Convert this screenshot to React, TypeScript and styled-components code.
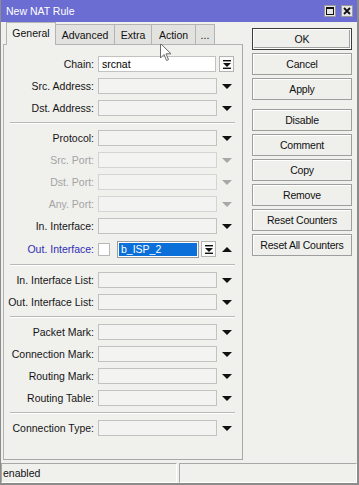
import React from 'react';
import styled, { createGlobalStyle, css } from 'styled-components';

const GlobalStyle = createGlobalStyle`
    body {
        margin: 0;
        font-family: "Liberation Sans", Arial, sans-serif;
        font-size: 10.5px;
        color: #111;
    }
`;

const StyledWindow = styled.div`
    width: 359px;
    height: 485px;
    box-sizing: border-box;
    display: flex;
    flex-direction: column;
    background: #f0f0ed;
    border-left: 1px solid #8c8c8c;
    border-right: 2px solid #8c8c8c;
    border-bottom: 2px solid #8c8c8c;
    position: relative;
    overflow: hidden;
`;

const StyledTitleBar = styled.div`
    height: 22px;
    flex: none;
    display: flex;
    align-items: center;
    justify-content: space-between;
    padding: 0 4px 0 5px;
    background: #6c6dd2;
    color: #fff;
    font-size: 10.5px;
`;

const StyledTitleButtons = styled.div`
    display: flex;
    gap: 5px;
`;

const StyledTitleButton = styled.div`
    width: 12px;
    height: 12px;
    box-sizing: border-box;
    background: #e6e6e6;
    border: 1px solid #9a9a9a;
    display: flex;
    align-items: center;
    justify-content: center;
`;

const StyledBody = styled.div`
    flex: 1;
    display: flex;
    padding-left: 2px;
`;

const StyledLeft = styled.div`
    width: 240px;
    display: flex;
    flex-direction: column;
`;

const StyledTabs = styled.div`
    height: 22px;
    display: flex;
    align-items: flex-end;
    padding-left: 3px;
    position: relative;
    z-index: 1;
`;

const StyledTab = styled.div<{ $active?: boolean; $width: number }>`
    width: ${({ $width }) => $width}px;
    box-sizing: border-box;
    display: flex;
    align-items: center;
    justify-content: center;
    border: 1px solid #b4b4b4;
    border-bottom: none;
    ${({ $active }) => $active
        ? css`
            height: 23px;
            margin-bottom: -1px;
            background: #f0f0ed;
            padding-bottom: 2px;
        `
        : css`
            height: 20px;
            background: #e2e2df;
            border-left: none;
        `}
`;

const StyledPanel = styled.div`
    height: 416px;
    box-sizing: border-box;
    border: 1px solid #b4b4b4;
    border-right-color: #a8a8a8;
    border-bottom-color: #a8a8a8;
    padding-top: 11px;
    display: flex;
    flex-direction: column;
    gap: 6px;
`;

const StyledRow = styled.div<{ $tall?: boolean }>`
    height: ${({ $tall }) => ($tall ? 18 : 16)}px;
    display: flex;
    align-items: center;
`;

const StyledLabel = styled.div<{ $tone?: 'normal' | 'disabled' | 'link' }>`
    width: 91px;
    padding-right: 1px;
    box-sizing: border-box;
    text-align: right;
    white-space: nowrap;
    color: ${({ $tone }) => ($tone === 'disabled' ? '#a4a4a4' : $tone === 'link' ? '#2f2fb4' : '#151515')};
`;

const StyledField = styled.div<{ $width: number; $white?: boolean; $disabled?: boolean }>`
    width: ${({ $width }) => $width}px;
    height: 16px;
    box-sizing: border-box;
    margin-left: 3px;
    padding-left: 3px;
    display: flex;
    align-items: center;
    background: ${({ $white }) => ($white ? '#fff' : '#f3f3f1')};
    border: 1px solid ${({ $disabled }) => ($disabled ? '#d4d4d2' : '#c2c2c0')};
    color: #000;
`;

const StyledSelectedField = styled.div`
    width: 82px;
    height: 17px;
    box-sizing: border-box;
    margin-left: 7px;
    border: 1px solid #9a9a9a;
    background: #fff;
    padding: 1px;
    display: flex;
`;

const StyledSelection = styled.div`
    flex: 1;
    background: #0a6fd8;
    color: #fff;
    padding-left: 2px;
    display: flex;
    align-items: center;
`;

const StyledCheckbox = styled.div`
    width: 12px;
    height: 13px;
    box-sizing: border-box;
    margin-left: 3px;
    background: #fff;
    border: 1px solid #b8b8b8;
`;

const StyledIconButton = styled.div<{ $gap: number }>`
    width: 15px;
    height: 16px;
    box-sizing: border-box;
    margin-left: ${({ $gap }) => $gap}px;
    background: #fbfbfb;
    border: 1px solid #b4b4b4;
    display: flex;
    align-items: center;
    justify-content: center;
`;

const StyledArrowSlot = styled.div<{ $width: number }>`
    width: ${({ $width }) => $width}px;
    display: flex;
    justify-content: center;
`;

const StyledArrow = styled.div<{ $up?: boolean; $disabled?: boolean }>`
    width: 0;
    height: 0;
    border-left: 5px solid transparent;
    border-right: 5px solid transparent;
    ${({ $up, $disabled }) => {
        const color = $disabled ? '#a8a8a8' : '#111';
        return $up
            ? css`border-bottom: 5px solid ${color};`
            : css`border-top: 5px solid ${color};`;
    }}
`;

const StyledSeparator = styled.div`
    height: 0;
    margin: 0 7px 0 6px;
    border-top: 1px solid #b9b9b7;
    border-bottom: 1px solid #fff;
`;

const StyledButtons = styled.div`
    display: flex;
    flex-direction: column;
    gap: 3px;
    padding: 6px 0 0 9px;
`;

const StyledButton = styled.div<{ $default?: boolean; $spaced?: boolean }>`
    width: 100px;
    height: 22px;
    box-sizing: border-box;
    display: flex;
    align-items: center;
    justify-content: center;
    letter-spacing: -0.2px;
    background: #efefec;
    border: 1px solid ${({ $default }) => ($default ? '#3c3c3c' : '#9e9e9e')};
    box-shadow: inset 1px 1px 0 #fff;
    margin-top: ${({ $spaced }) => ($spaced ? 6 : 0)}px;
    ${({ $default }) => $default && css`
        box-shadow: inset 0 0 0 1px #fff, inset -1px -1px 0 1px #a0a0a0;
    `}
`;

const StyledStatusBar = styled.div`
    height: 22px;
    flex: none;
    display: flex;
    gap: 2px;
    padding: 2px 0 0 0;
    box-sizing: border-box;
`;

const StyledStatusCell = styled.div<{ $width: number }>`
    width: ${({ $width }) => $width}px;
    height: 20px;
    box-sizing: border-box;
    border-top: 1px solid #a8a8a8;
    border-left: 1px solid #a8a8a8;
    border-bottom: 1px solid #fff;
    border-right: 1px solid #fff;
    padding-left: 1px;
    display: flex;
    align-items: center;
`;

const StyledCursor = styled.svg`
    position: absolute;
    left: 159px;
    top: 43px;
`;

const ListIcon = () => (
    <svg width="8" height="9" viewBox="0 0 8 9">
        <rect x="0" y="0" width="8" height="1.4" fill="#111" />
        <path d="M0 3 L8 3 L4 7 Z" fill="#111" />
        <rect x="0" y="7.6" width="8" height="1.4" fill="#111" />
    </svg>
);

type Tone = 'normal' | 'disabled';

type RowItem =
    | { kind: 'field'; label: string; tone?: Tone }
    | { kind: 'sep' }
    | { kind: 'chain' }
    | { kind: 'out' };

const rows: RowItem[] = [
    { kind: 'chain' },
    { kind: 'field', label: 'Src. Address:' },
    { kind: 'field', label: 'Dst. Address:' },
    { kind: 'sep' },
    { kind: 'field', label: 'Protocol:' },
    { kind: 'field', label: 'Src. Port:', tone: 'disabled' },
    { kind: 'field', label: 'Dst. Port:', tone: 'disabled' },
    { kind: 'field', label: 'Any. Port:', tone: 'disabled' },
    { kind: 'field', label: 'In. Interface:' },
    { kind: 'out' },
    { kind: 'sep' },
    { kind: 'field', label: 'In. Interface List:' },
    { kind: 'field', label: 'Out. Interface List:' },
    { kind: 'sep' },
    { kind: 'field', label: 'Packet Mark:' },
    { kind: 'field', label: 'Connection Mark:' },
    { kind: 'field', label: 'Routing Mark:' },
    { kind: 'field', label: 'Routing Table:' },
    { kind: 'sep' },
    { kind: 'field', label: 'Connection Type:' },
];

const tabs = [
    { name: 'General', width: 50 },
    { name: 'Advanced', width: 59 },
    { name: 'Extra', width: 37 },
    { name: 'Action', width: 44 },
    { name: '...', width: 19 },
];

const buttons = ['OK', 'Cancel', 'Apply', 'Disable', 'Comment', 'Copy', 'Remove', 'Reset Counters', 'Reset All Counters'];

const renderRow = (row: RowItem, index: number) => {
    if (row.kind === 'sep') return <StyledSeparator key={index} />;

    if (row.kind === 'chain') {
        return (
            <StyledRow key={index}>
                <StyledLabel>Chain:</StyledLabel>
                <StyledField $width={118} $white>srcnat</StyledField>
                <StyledIconButton $gap={3}><ListIcon /></StyledIconButton>
            </StyledRow>
        );
    }

    if (row.kind === 'out') {
        return (
            <StyledRow key={index} $tall>
                <StyledLabel $tone="link">Out. Interface:</StyledLabel>
                <StyledCheckbox />
                <StyledSelectedField>
                    <StyledSelection>b_ISP_2</StyledSelection>
                </StyledSelectedField>
                <StyledIconButton $gap={2}><ListIcon /></StyledIconButton>
                <StyledArrowSlot $width={22}><StyledArrow $up /></StyledArrowSlot>
            </StyledRow>
        );
    }

    const disabled = row.tone === 'disabled';
    return (
        <StyledRow key={index}>
            <StyledLabel $tone={row.tone}>{row.label}</StyledLabel>
            <StyledField $width={119} $disabled={disabled} />
            <StyledArrowSlot $width={20}><StyledArrow $disabled={disabled} /></StyledArrowSlot>
        </StyledRow>
    );
};

export default function App() {
    return (
        <StyledWindow>
            <GlobalStyle />
            <StyledTitleBar>
                <span>New NAT Rule</span>
                <StyledTitleButtons>
                    <StyledTitleButton>
                        <svg width="8" height="8" viewBox="0 0 8 8">
                            <rect x="0.5" y="0.5" width="7" height="7" fill="none" stroke="#111" />
                            <rect x="0" y="0" width="8" height="2" fill="#111" />
                        </svg>
                    </StyledTitleButton>
                    <StyledTitleButton>
                        <svg width="8" height="8" viewBox="0 0 8 8">
                            <path d="M1 1 L7 7 M7 1 L1 7" stroke="#111" strokeWidth="1.8" />
                        </svg>
                    </StyledTitleButton>
                </StyledTitleButtons>
            </StyledTitleBar>

            <StyledBody>
                <StyledLeft>
                    <StyledTabs>
                        {tabs.map((tab, i) => (
                            <StyledTab key={tab.name} $active={i === 0} $width={tab.width}>
                                {tab.name}
                            </StyledTab>
                        ))}
                    </StyledTabs>
                    <StyledPanel>{rows.map(renderRow)}</StyledPanel>
                </StyledLeft>

                <StyledButtons>
                    {buttons.map((label, i) => (
                        <StyledButton key={label} $default={i === 0} $spaced={label === 'Disable'}>
                            {label}
                        </StyledButton>
                    ))}
                </StyledButtons>
            </StyledBody>

            <StyledStatusBar>
                <StyledStatusCell $width={176}>enabled</StyledStatusCell>
                <StyledStatusCell $width={178} />
            </StyledStatusBar>

            <StyledCursor width="12" height="19" viewBox="0 0 12 19">
                <path d="M0.5 0.5 L0.5 15 L4 11.5 L6.5 17.5 L8.5 16.6 L6 10.8 L11 10.8 Z" fill="#fff" stroke="#6a6a6a" strokeWidth="1" />
            </StyledCursor>
        </StyledWindow>
    );
}
